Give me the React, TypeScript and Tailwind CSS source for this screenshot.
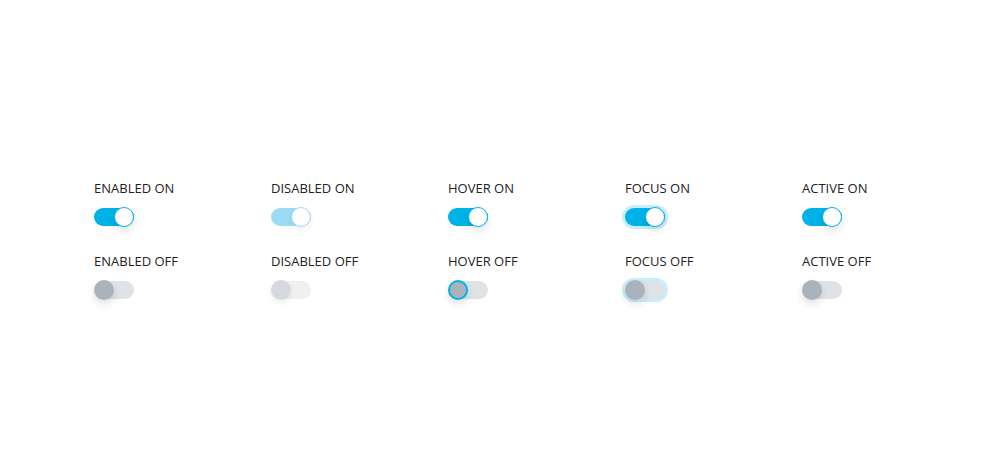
import React from "react";

type Variant =
  | "enabled"
  | "disabled"
  | "hover"
  | "focus"
  | "active";

function Toggle({ on, variant }: { on: boolean; variant: Variant }) {
  const disabled = variant === "disabled";
  const trackColor = on
    ? disabled
      ? "bg-[#9bdcf4]"
      : "bg-[#00b2e8]"
    : disabled
    ? "bg-[#eef0f2]"
    : "bg-[#dfe2e6]";
  const ring = variant === "focus" ? "ring-[3px] ring-[#c8eefb]" : "";
  let thumb = "";
  if (on) {
    thumb = disabled
      ? "bg-white border border-[#9bdcf4]"
      : "bg-white border border-[#00b2e8]";
  } else {
    if (disabled) thumb = "bg-[#d6d9dd]";
    else if (variant === "hover") thumb = "bg-[#aab3bc] border-2 border-[#00b2e8]";
    else thumb = "bg-[#aab3bc]";
  }
  return (
    <div className="relative w-[40px] h-[20px] flex items-center">
      <div className={`w-[40px] h-[18px] rounded-full ${trackColor} ${ring}`} />
      <div
        className={`absolute top-0 w-[20px] h-[20px] rounded-full box-border ${thumb} ${
          on ? "right-0" : "left-0"
        } ${disabled ? "shadow-[0_3px_6px_rgba(0,0,0,0.06)]" : "shadow-[0_4px_8px_rgba(0,0,0,0.12)]"}`}
      />
    </div>
  );
}

const cols: { v: Variant; name: string }[] = [
  { v: "enabled", name: "ENABLED" },
  { v: "disabled", name: "DISABLED" },
  { v: "hover", name: "HOVER" },
  { v: "focus", name: "FOCUS" },
  { v: "active", name: "ACTIVE" },
];

export default function App() {
  return (
    <div
      className="w-[1000px] h-[464px] bg-white pt-[180px] pl-[94px]"
      style={{ fontFamily: "'Open Sans', 'Noto Sans', sans-serif" }}
    >
      <div className="grid grid-cols-[repeat(5,177px)] gap-y-[26px]">
        {[true, false].map((on) =>
          cols.map((c) => (
            <div key={c.name + on} className="flex flex-col">
              <div className="h-[16px] leading-[16px] text-[13px] tracking-[0px] text-[#222]">
                {c.name} {on ? "ON" : "OFF"}
              </div>
              <div className="mt-[11px]">
                <Toggle on={on} variant={c.v} />
              </div>
            </div>
          ))
        )}
      </div>
    </div>
  );
}
